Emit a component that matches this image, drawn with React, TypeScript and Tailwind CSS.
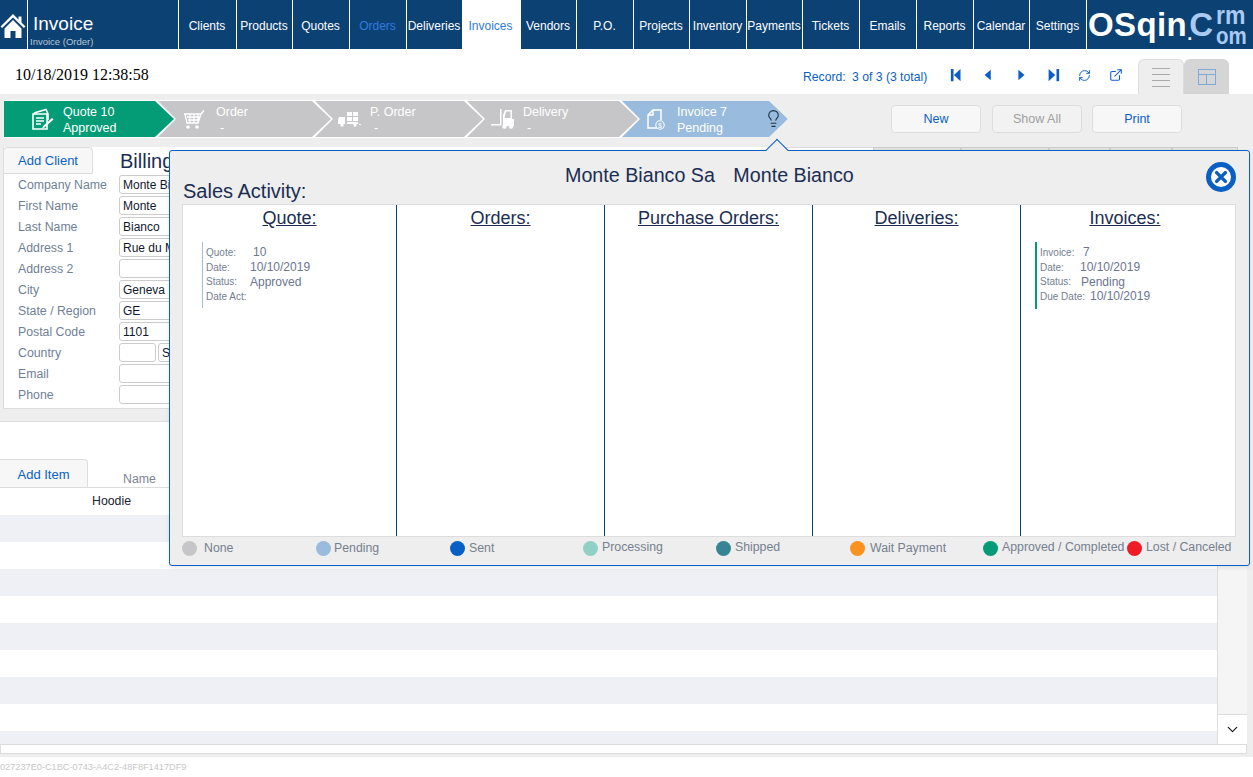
import React from "react";
import { ExternalLink, RefreshCw, ChevronDown, Lightbulb } from "lucide-react";

const navItems = [
  { label: "Clients", w: "w-[58px]" },
  { label: "Products", w: "w-[56px]" },
  { label: "Quotes", w: "w-[57px]" },
  { label: "Orders", w: "w-[57px]", tone: "text-[#2f7be0]" },
  { label: "Deliveries", w: "w-[56px]" },
  { label: "Invoices", w: "w-[58px]", active: true },
  { label: "Vendors", w: "w-[56px]" },
  { label: "P.O.", w: "w-[57px]" },
  { label: "Projects", w: "w-[56px]" },
  { label: "Inventory", w: "w-[57px]" },
  { label: "Payments", w: "w-[56px]" },
  { label: "Tickets", w: "w-[57px]" },
  { label: "Emails", w: "w-[57px]" },
  { label: "Reports", w: "w-[57px]" },
  { label: "Calendar", w: "w-[56px]" },
  { label: "Settings", w: "w-[57px]" },
];

const fields = [
  { label: "Company Name", value: "Monte Bianco Sa" },
  { label: "First Name", value: "Monte" },
  { label: "Last Name", value: "Bianco" },
  { label: "Address 1", value: "Rue du Mont Blanc" },
  { label: "Address 2", value: "" },
  { label: "City", value: "Geneva" },
  { label: "State / Region", value: "GE" },
  { label: "Postal Code", value: "1101" },
];

const legend = [
  { label: "None", dot: "bg-[#c6c6c8]", w: "w-[134px]", gap: "ml-[7px]" },
  { label: "Pending", dot: "bg-[#99bbdd]", w: "w-[134px]", gap: "ml-[3px]" },
  { label: "Sent", dot: "bg-[#0a5fc4]", w: "w-[133px]", gap: "ml-[4px]" },
  { label: "Processing", dot: "bg-[#91d1c5]", w: "w-[133px]", gap: "ml-[4px] mb-[2px]" },
  { label: "Shipped", dot: "bg-[#368594]", w: "w-[134px]", gap: "ml-[4px] mb-[2px]" },
  { label: "Wait Payment", dot: "bg-[#fa9120]", w: "w-[133px]", gap: "ml-[5px]" },
  { label: "Approved / Completed", dot: "bg-[#049b77]", w: "w-[144px]", gap: "ml-[4px] mb-[2px]" },
  { label: "Lost / Canceled", dot: "bg-[#ee1c25]", w: "w-[110px]", gap: "ml-[4px] mb-[2px]" },
];

const arrowClip = "[clip-path:polygon(0_0,calc(100%-19px)_0,100%_50%,calc(100%-19px)_100%,0_100%)]";

function HomeIcon() {
  return (
    <svg width="26" height="26" viewBox="0 0 26 26" fill="white">
      <path d="M13 1 0.5 13.5l1.6 1.6L13 4.4l10.900 10.700 1.600-1.600-4-4V3.500h-3v3z" />
      <path d="M4.500 15.500 13 7l8.500 8.500V25h-6v-7h-5v7h-6z" />
    </svg>
  );
}

function QuoteIcon() {
  return (
    <svg width="24" height="22" viewBox="0 0 24 22" fill="none" stroke="white" strokeWidth="1.600">
      <path d="M3 5 15 1.500l2 4.500v6M2 6h14v15H2z" />
      <path d="M5 10h8M5 13h8M5 16h5" />
      <path d="m12 18 9-8 1.500 1.500-9 8-2.500 1z" fill="white" stroke="none" />
    </svg>
  );
}

function CartIcon() {
  return (
    <svg width="22" height="21" viewBox="0 0 22 21" fill="none" stroke="white" strokeWidth="1.300">
      <path d="M1 5h17l3-3.500M2 5l2 9h11l3-9M4 8h13M5 11h11M7 5v9M11 5v9M15 5v9" />
      <circle cx="5" cy="18" r="1.800" fill="white" stroke="none" />
      <circle cx="14" cy="18" r="1.800" fill="white" stroke="none" />
    </svg>
  );
}

function TruckIcon() {
  return (
    <svg width="23" height="15" viewBox="0 0 23 15" fill="white">
      <path d="M9 0h5v4H9zM15 0h5v4h-5zM9 5h5v4H9zM15 5h5v4h-5zM9 10h11v2H9zM1 5h6v7H0V8z" />
      <circle cx="4" cy="13" r="1.700" />
      <circle cx="17" cy="13" r="1.700" />
      <path d="M21 12h2v1h-2z" />
    </svg>
  );
}

function ForkliftIcon() {
  return (
    <svg width="23" height="20" viewBox="0 0 23 20" fill="white">
      <path d="M9 0v15H0v1.500h10.500V0z" />
      <path d="M12 6 14 1h7v9h2v7H12zm1.500 3h6V2.500h-4.500z" fillRule="evenodd" />
      <circle cx="13.500" cy="17.500" r="2.200" />
      <circle cx="20" cy="17.500" r="2.200" />
    </svg>
  );
}

function InvoiceIcon() {
  return (
    <svg width="19" height="21" viewBox="0 0 19 21" fill="none" stroke="white" strokeWidth="1.500">
      <path d="M11 19H2V6l5-5h8v10" />
      <path d="M2 6h5V1" />
      <circle cx="14" cy="16" r="4.200" strokeWidth="1.100" />
      <text x="12" y="18.500" fontSize="7" fill="white" stroke="none" fontFamily="Liberation Sans">$</text>
    </svg>
  );
}

function Step({ title, sub, icon, width, overlap, z, fill, pad, gap, last }: {
  title: string;
  sub: string;
  icon: React.ReactNode;
  width: string;
  overlap: string;
  z: string;
  fill: string;
  pad: string;
  gap: string;
  last?: boolean;
}) {
  return (
    <div className={`relative h-[38px] py-px ${width} ${overlap} ${z} ${arrowClip} ${last ? "" : "bg-white pr-[2px]"}`}>
      <div className={`relative flex h-[36px] items-center ${fill} ${pad} ${arrowClip}`}>
        <div className="flex w-[32px] shrink-0 justify-center">{icon}</div>
        <div className={`pt-[1px] text-[12.5px] leading-[16px] text-white ${gap}`}>
          <div>{title}</div>
          <div className={sub === "-" ? "pl-[4px]" : ""}>{sub}</div>
        </div>
        {last && <Lightbulb size={19} strokeWidth={1.400} className="absolute right-[5px] top-[8px] text-[#20303f]" />}
      </div>
    </div>
  );
}

function PagerIcon({ kind }: { kind: "first" | "prev" | "next" | "last" }) {
  const d = {
    first: "M1 1h3v14H1zM12 1v14L4.500 8z",
    prev: "M10 2v12L3 8z",
    next: "M5 2v12l7-6z",
    last: "M12 1h3v14h-3zM3 1v14l7.500-7z",
  }[kind];
  return (
    <svg width="14" height="14" viewBox="0 0 16 16" fill="#0a5fc4">
      <path d={d} />
    </svg>
  );
}

function Cell({ value }: { value: string }) {
  return (
    <input
      readOnly
      value={value}
      className="block h-[19px] w-full rounded-[3px] border border-[#cccccc] bg-white px-[3px] pt-[1px] text-[12px] text-[#10182e] outline-none"
    />
  );
}

function FieldLabel({ children }: { children: React.ReactNode }) {
  return <div className="w-[115px] pl-[14px] pt-[1px] text-[12.300px] text-[#6f7f95]">{children}</div>;
}

function ActivityLine({ label, value, labelW }: { label: string; value?: string; labelW: string }) {
  return (
    <div className="flex h-[14.7px] items-center">
      <span className={`text-[10px] text-[#75808f] ${labelW}`}>{label}</span>
      {value && <span className="text-[12px] text-[#6b7590]">{value}</span>}
    </div>
  );
}

function ActivityColumn({ title, width, children, divider = true }: {
  title: string;
  width: string;
  children?: React.ReactNode;
  divider?: boolean;
}) {
  return (
    <div className={`h-full pt-[2px] ${width} ${divider ? "border-r border-[#0c4174]" : "pr-[6px]"}`}>
      <div className="text-center text-[18px] leading-[22px] text-[#1b2d52] underline">{title}</div>
      {children}
    </div>
  );
}

export default function App() {
  return (
    <div className="relative h-[777px] w-[1253px] overflow-hidden bg-white font-['Liberation_Sans',Arial,sans-serif]">
      <header className="flex h-[50px] border-b border-white bg-[#0c4174] text-white">
        <div className="flex w-[28px] items-center border-r border-white pt-[2px]">
          <HomeIcon />
        </div>
        <div className="w-[150px] pl-[2px]">
          <div className="pl-[3px] pt-[12px] text-[19px] leading-[24px]">Invoice</div>
          <div className="text-[9.500px] leading-[11px] text-[#b8c6d6]">Invoice (Order)</div>
        </div>
        {navItems.map((item) => (
          <div
            key={item.label}
            className={`flex shrink-0 items-center justify-center whitespace-nowrap pr-[1px] pt-[2px] text-[12px] ${item.w} ${item.active ? "bg-white text-[#2f7be0]" : `border-l border-white ${item.tone ?? "text-white"}`}`}
          >
            {item.label}
          </div>
        ))}
        <div className="flex flex-1 items-center border-l border-white pl-[1px]">
          <span className="text-[33px] font-bold leading-none tracking-[0.4px]">OSqin</span>
          <span className="self-end pb-[6px] text-[18px] font-bold leading-none">.</span>
          <span className="ml-[-3px] text-[33px] font-bold leading-none text-[#a9cbf3]">C</span>
          <div className="ml-[3px] font-bold leading-[19px] text-[#a9cbf3]">
            <div className="origin-center scale-y-[1.15] text-[23px]">rm</div>
            <div className="origin-center scale-y-[1.2] text-[20.500px]">om</div>
          </div>
        </div>
      </header>

      <div className="flex h-[44px] items-start bg-white">
        <div className="w-[803px] shrink-0 pl-[15px] pt-[15px] font-['Liberation_Serif',serif] text-[16px] leading-[20px] text-black">10/18/2019 12:38:58</div>
        <div className="flex w-[335px] shrink-0 items-center pt-[18px] text-[12.200px] leading-[16px] text-[#0a5fc4]">
          <span className="w-[49px] shrink-0">Record:</span>
          <span className="w-[98px] shrink-0 whitespace-nowrap">3 of 3 (3 total)</span>
          <div className="mb-[4px] flex items-center gap-[18px]">
            <PagerIcon kind="first" />
            <PagerIcon kind="prev" />
            <PagerIcon kind="next" />
            <PagerIcon kind="last" />
            <RefreshCw size={13} strokeWidth={1.800} />
            <ExternalLink size={14} strokeWidth={1.800} />
          </div>
        </div>
        <div className="mt-[9px] flex h-[35px]">
          <div className="flex w-[46px] flex-col items-center justify-center gap-[5px] rounded-t-[6px] border border-b-0 border-[#dddddd] bg-[#eeeeee]">
            <div className="h-px w-[18px] bg-[#aaaaaa]" />
            <div className="h-px w-[18px] bg-[#aaaaaa]" />
            <div className="h-px w-[18px] bg-[#aaaaaa]" />
            <div className="h-px w-[18px] bg-[#aaaaaa]" />
          </div>
          <div className="flex w-[45px] items-center justify-center rounded-t-[6px] bg-[#d5d5d5]">
            <div className="grid h-[16px] w-[18px] grid-cols-2 grid-rows-[5px_1fr] border border-[#7fa9dc]">
              <div className="col-span-2 border-b border-[#7fa9dc]" />
              <div className="border-r border-[#7fa9dc]" />
            </div>
          </div>
        </div>
      </div>

      <div className="h-[663px] bg-[#eeeeee]">
        <div className="flex h-[53px] items-start">
          <div className="flex w-[891px] shrink-0 pl-[4px] pt-[6px]">
            <Step title="Quote 10" sub="Approved" icon={<QuoteIcon />} width="w-[172px]" overlap="" z="z-50" fill="bg-[#049b77]" pad="pl-[23px]" gap="ml-[4px]" />
            <Step title="Order" sub="-" icon={<CartIcon />} width="w-[177px]" overlap="ml-[-20px]" z="z-40" fill="bg-[#c6c6c8]" pad="pl-[22px]" gap="ml-[6px]" />
            <Step title="P. Order" sub="-" icon={<TruckIcon />} width="w-[173px]" overlap="ml-[-21px]" z="z-30" fill="bg-[#c6c6c8]" pad="pl-[21px]" gap="ml-[5px]" />
            <Step title="Delivery" sub="-" icon={<ForkliftIcon />} width="w-[175px]" overlap="ml-[-20px]" z="z-20" fill="bg-[#c6c6c8]" pad="pl-[21px]" gap="ml-[5px]" />
            <Step title="Invoice 7" sub="Pending" icon={<InvoiceIcon />} width="w-[168px]" overlap="ml-[-20px]" z="z-10" fill="bg-[#99bbdd]" pad="pl-[19px]" gap="ml-[6px]" last />
          </div>
          <div className="flex pt-[11px] text-[12.500px]">
            <div className="flex h-[28px] w-[90px] items-center justify-center rounded-[4px] border border-[#dddddd] bg-[#f7f7f7] text-[#0a5fc4]">New</div>
            <div className="ml-[11px] flex h-[28px] w-[90px] items-center justify-center rounded-[4px] border border-[#dddddd] bg-[#f2f2f2] text-[#a0a0a0]">Show All</div>
            <div className="ml-[10px] flex h-[28px] w-[90px] items-center justify-center rounded-[4px] border border-[#dddddd] bg-[#f7f7f7] text-[#0a5fc4]">Print</div>
          </div>
        </div>

        <div className="flex">
          <div className="ml-[3px] h-[262px] w-[780px] border border-t-0 border-[#dddddd] bg-white">
            <div className="flex h-[27px] items-end">
              <div className="ml-[-1px] flex h-[27px] w-[90px] items-center justify-center rounded-t-[4px] border border-[#dddddd] bg-[#f7f7f7] text-[13px] text-[#0a5fc4]">Add Client</div>
              <div className="ml-[27px] pb-[1px] text-[20px] leading-[24px] text-[#1b2d52]">Billing</div>
            </div>
            {fields.map((f) => (
              <div key={f.label} className="flex h-[21px] items-center">
                <FieldLabel>{f.label}</FieldLabel>
                <div className="w-[200px]"><Cell value={f.value} /></div>
              </div>
            ))}
            <div className="flex h-[21px] items-center">
              <FieldLabel>Country</FieldLabel>
              <div className="w-[37px]"><Cell value="" /></div>
              <div className="ml-[2px] w-[120px]"><Cell value="Switzerland" /></div>
            </div>
            {["Email", "Phone"].map((label) => (
              <div key={label} className="flex h-[21px] items-center">
                <FieldLabel>{label}</FieldLabel>
                <div className="w-[200px]"><Cell value="" /></div>
              </div>
            ))}
          </div>
          <div className="flex h-[5px] flex-1">
            <div className="w-[90px] border-t border-[#dddddd] bg-white" />
            <div className="w-[88px] border border-b-0 border-[#cccccc] bg-[#e2e2e2]" />
            <div className="w-[88px] border border-b-0 border-[#cccccc] bg-[#e2e2e2]" />
            <div className="w-[61px] border border-b-0 border-[#cccccc] bg-[#e2e2e2]" />
            <div className="w-[62px] border border-b-0 border-[#cccccc] bg-[#e2e2e2]" />
            <div className="w-[66px] border border-b-0 border-[#cccccc] bg-[#e2e2e2]" />
          </div>
        </div>

        <div className="mr-[6px] mt-[12px] flex h-[323px] flex-col border-t border-[#dddddd] bg-white">
          <div className="flex h-[66px] shrink-0 items-end border-b border-[#dddddd]">
            <div className="flex h-[28px] w-[88px] items-center justify-center rounded-tr-[4px] border border-b-0 border-l-0 border-[#dddddd] bg-[#f7f7f7] pt-[2px] text-[13px] text-[#0a5fc4]">Add Item</div>
            <div className="mb-[-1px] ml-[35px] text-[12.300px] text-[#7b8494]">Name</div>
          </div>
          <div className="flex min-h-0 flex-1">
            <div className="w-[1217px] overflow-hidden">
              <div className="flex h-[27px] items-center pb-[1px] pl-[92px] text-[12.300px] text-[#1c2230]">Hoodie</div>
              {[1, 2, 3, 4, 5, 6, 7, 8, 9].map((n) => (
                <div key={n} className={`h-[27px] ${n % 2 === 1 ? "bg-[#eff0f5]" : "bg-white"}`} />
              ))}
            </div>
            <div className="flex w-[30px] flex-col border-l border-[#dddddd] bg-[#f5f5f5]">
              <div className="flex-1" />
              <div className="flex h-[30px] items-center justify-center border-t border-[#dddddd] bg-white">
                <ChevronDown size={17} strokeWidth={1.600} className="text-[#111111]" />
              </div>
            </div>
          </div>
        </div>
        <div className="mr-[6px] h-[10px] border border-[#dddddd] bg-white" />
      </div>

      <div className="h-[20px] bg-white pt-[3px] text-[9.200px] leading-[14px] text-[#c8c8c8]">027237E0-C1BC-0743-A4C2-48F8F1417DF9</div>

      <div className="absolute left-[169px] top-[150px] z-[60] h-[416px] w-[1081px] rounded-[3px] border border-[#0a5fc4] bg-[#eeeeee] pl-[12px] pr-[13px] shadow-[0_2px_4px_rgba(0,0,0,0.08)]">
        <div className="absolute left-[599px] top-[-9px] size-[16px] rotate-45 border-l border-t border-[#0a5fc4] bg-[#eeeeee]" />
        <div className="relative flex h-[53px]">
          <div className="w-[300px] pl-[1px] pt-[28px] text-[20px] leading-[24px] text-[#1b2d52]">Sales Activity:</div>
          <div className="absolute left-0 right-0 top-[12px] whitespace-pre pl-[383px] text-[19.700px] leading-[24px] text-[#1b2d52]">
            Monte Bianco Sa   <span className="ml-[2px]">Monte Bianco</span>
          </div>
          <div className="absolute right-0 top-[11px] flex size-[30px] items-center justify-center rounded-full border-[5px] border-[#0a5fc4] bg-white">
            <svg width="14" height="14" viewBox="0 0 16 16" stroke="#0a5fc4" strokeWidth="4" strokeLinecap="round">
              <path d="M3 3l10 10M13 3 3 13" />
            </svg>
          </div>
        </div>
        <div className="flex h-[333px] border border-[#dddddd] bg-white">
          <ActivityColumn title="Quote:" width="w-[214px]">
            <div className="ml-[19px] mt-[13px] h-[66px] border-l border-[#a5bcd5] pl-[3px] pt-[3px]">
              <ActivityLine label="Quote:" value="10" labelW="w-[47px]" />
              <ActivityLine label="Date:" value="10/10/2019" labelW="w-[44px]" />
              <ActivityLine label="Status:" value="Approved" labelW="w-[44px]" />
              <ActivityLine label="Date Act:" labelW="w-[44px]" />
            </div>
          </ActivityColumn>
          <ActivityColumn title="Orders:" width="w-[208px]" />
          <ActivityColumn title="Purchase Orders:" width="w-[208px]" />
          <ActivityColumn title="Deliveries:" width="w-[208px]" />
          <ActivityColumn title="Invoices:" width="flex-1" divider={false}>
            <div className="ml-[14px] mt-[13px] h-[67px] border-l-2 border-[#049b77] pl-[3px] pt-[3px]">
              <ActivityLine label="Invoice:" value="7" labelW="w-[43px]" />
              <ActivityLine label="Date:" value="10/10/2019" labelW="w-[40px]" />
              <ActivityLine label="Status:" value="Pending" labelW="w-[41px]" />
              <ActivityLine label="Due Date:" value="10/10/2019" labelW="w-[50px]" />
            </div>
          </ActivityColumn>
        </div>
        <div className="flex h-[22px] items-center">
          {legend.map((l) => (
            <div key={l.label} className={`flex shrink-0 items-center ${l.w}`}>
              <span className={`size-[15px] shrink-0 rounded-full ${l.dot}`} />
              <span className={`whitespace-nowrap text-[12.300px] text-[#75808f] ${l.gap}`}>{l.label}</span>
            </div>
          ))}
        </div>
      </div>
    </div>
  );
}
